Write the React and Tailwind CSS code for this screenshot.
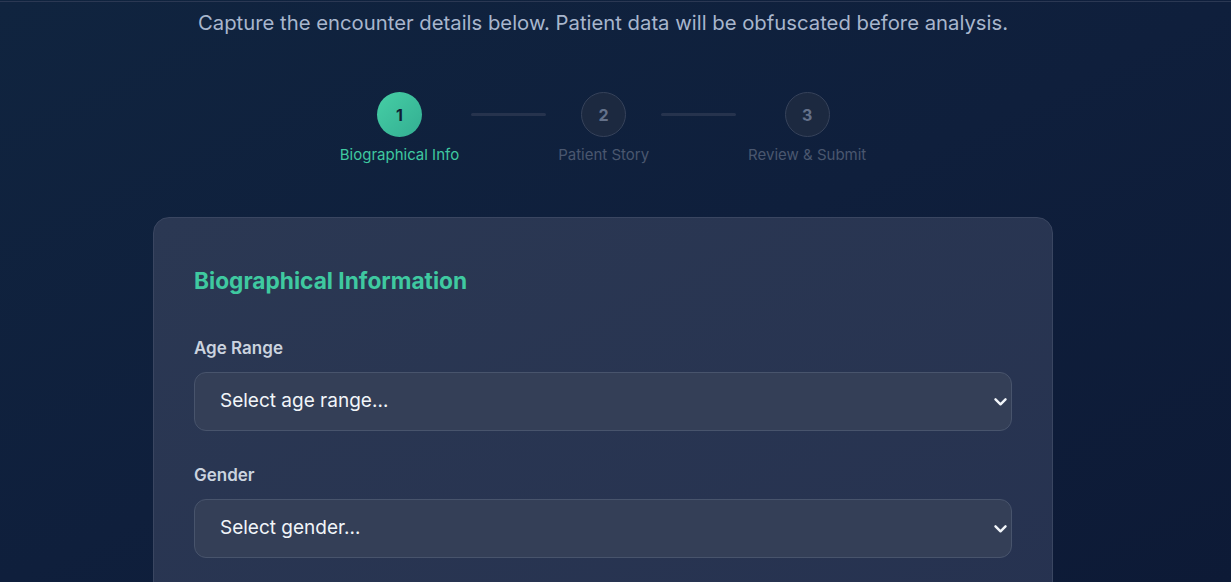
import React from "react";

const steps = [
  { n: 1, label: "Biographical Info", active: true },
  { n: 2, label: "Patient Story", active: false },
  { n: 3, label: "Review & Submit", active: false },
];

const Chevron = () => (
  <svg
    className="pointer-events-none absolute right-[5px] top-1/2 -translate-y-1/2"
    width="13"
    height="9"
    viewBox="0 0 13 9"
    fill="none"
  >
    <path
      d="M1.5 1.8 L6.5 6.8 L11.5 1.8"
      stroke="#f1f5f9"
      strokeWidth="2.4"
      strokeLinecap="round"
      strokeLinejoin="round"
    />
  </svg>
);

const Field = ({ label, placeholder }) => (
  <div className="mb-8">
    <label className="mb-3 block text-[17px] font-semibold leading-6 text-[#cbd3df]">
      {label}
    </label>
    <div className="relative">
      <select
        defaultValue=""
        className="h-[59px] w-full appearance-none rounded-xl border border-[#48546c] bg-[#343f57] pl-[25px] pr-6 text-[19px] text-[#f1f5f9] outline-none"
      >
        <option value="">{placeholder}</option>
      </select>
      <Chevron />
    </div>
  </div>
);

const App = () => {
  return (
    <div
      className="h-[582px] overflow-hidden bg-gradient-to-br from-[#10243f] via-[#0f1f3c] to-[#0d1a36]"
      style={{ fontFamily: "Inter, 'Liberation Sans', sans-serif" }}
    >
      <div className="h-[2px] border-b border-[#2b3853]" />

      <div className="flex flex-col items-center pr-[25px]">
        {/* Subtitle */}
        <p className="mt-[7px] text-[20.3px] leading-7 text-[#a8b6cd]">
          Capture the encounter details below. Patient data will be obfuscated before analysis.
        </p>

        {/* Stepper */}
        <div className="mt-[55px] flex items-start gap-3">
          {steps.map((s, i) => (
            <React.Fragment key={s.n}>
              {i > 0 && <div className="mt-[21px] h-[3px] w-[75px] rounded bg-[#26334d]" />}
              <div className="flex flex-col items-center">
                <div
                  className={
                    s.active
                      ? "flex h-[45px] w-[45px] items-center justify-center rounded-full bg-gradient-to-br from-[#46cfa5] to-[#33ae92] text-base font-bold text-[#0f1e35]"
                      : "flex h-[45px] w-[45px] items-center justify-center rounded-full border border-[#36425a] bg-[#1c2940] text-base font-bold text-[#64718a]"
                  }
                >
                  {s.n}
                </div>
                <span
                  className={
                    s.active
                      ? "mt-2 text-[15px] leading-5 text-[#3fc9a0]"
                      : "mt-2 text-[15px] leading-5 text-[#4a576f]"
                  }
                >
                  {s.label}
                </span>
              </div>
            </React.Fragment>
          ))}
        </div>

        {/* Card */}
        <div className="mt-[52px] h-[420px] w-[900px] rounded-2xl border border-[#3a4661] bg-gradient-to-br from-[#2b3853] to-[#263250] px-10 pt-[47px]">
          <h2 className="mb-[39px] text-[22.7px] font-bold leading-8 text-[#3fc9a0]">
            Biographical Information
          </h2>
          <Field label="Age Range" placeholder="Select age range…" />
          <Field label="Gender" placeholder="Select gender…" />
        </div>
      </div>
    </div>
  );
};

export default App;
